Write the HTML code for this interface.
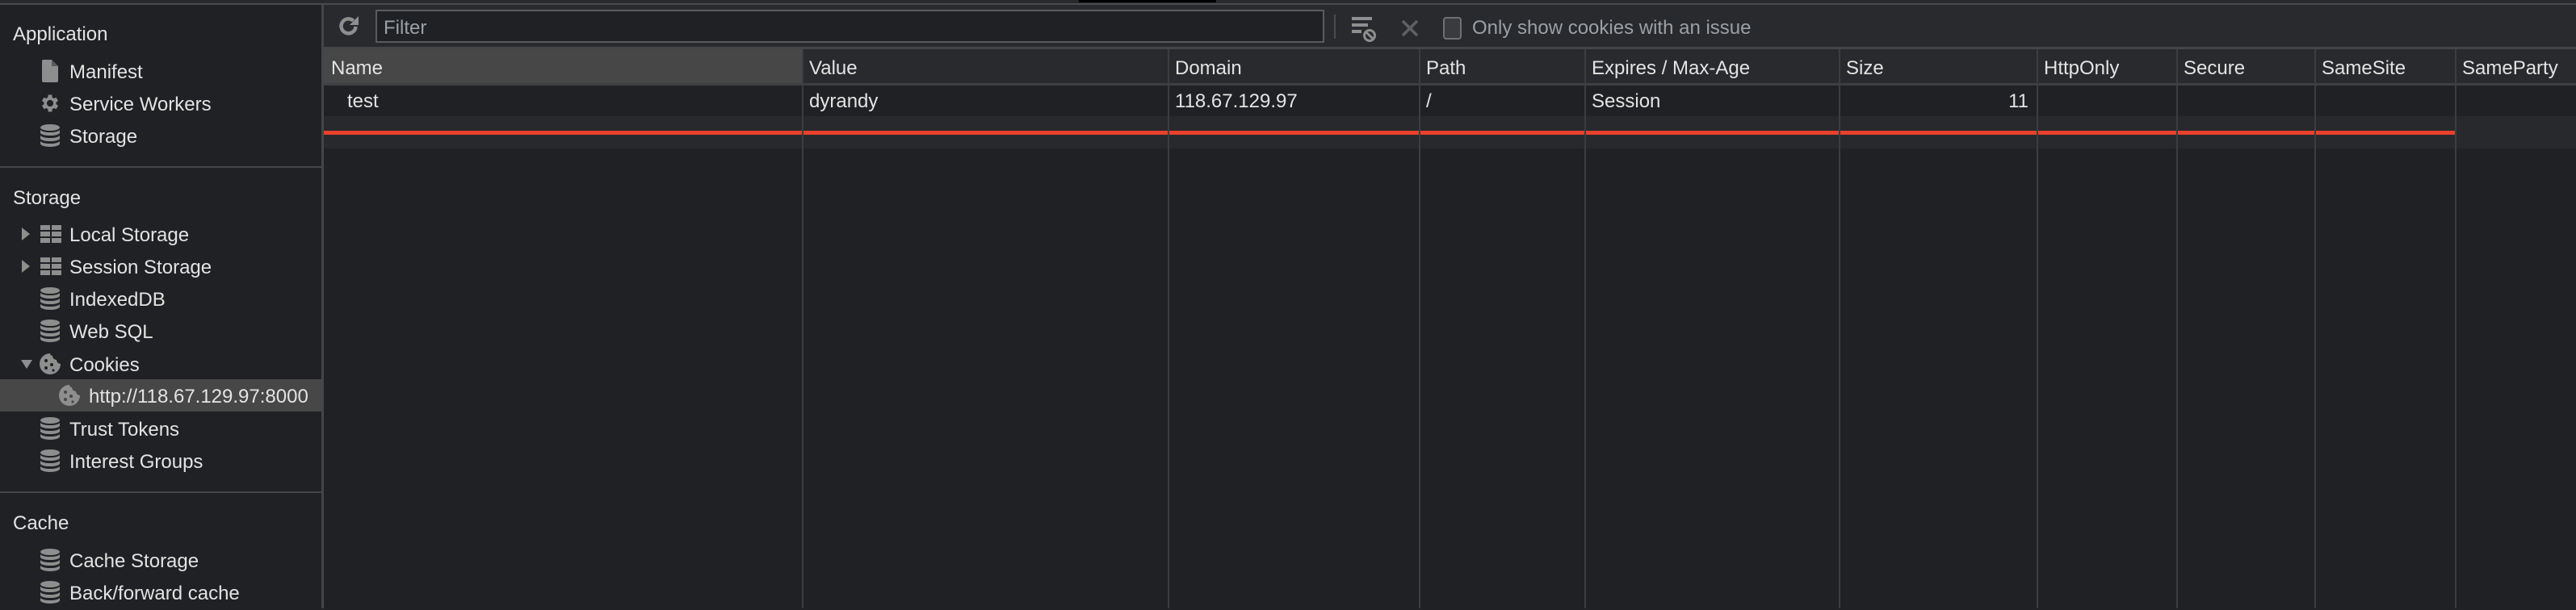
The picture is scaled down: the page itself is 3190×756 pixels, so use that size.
<!DOCTYPE html>
<html><head><meta charset="utf-8"><style>
*{margin:0;padding:0;box-sizing:border-box}
body{width:3190px;height:754px;background:#202124;font-family:"Liberation Sans",Arial,sans-serif;font-size:24px;color:#e3e3e3;position:relative;overflow:hidden}
.a{position:absolute;white-space:nowrap}
.t{position:absolute;white-space:nowrap;line-height:40px;height:40px;padding-top:2px}
.ic{position:absolute}
</style></head><body>
<div class="a" style="left:0;top:0;width:3190px;height:5px;background:#292a2d"></div>
<div class="a" style="left:1336px;top:0;width:170px;height:3px;background:#000"></div>
<div class="a" style="left:0;top:4px;width:3190px;height:2px;background:#4a4b4e"></div>
<!-- sidebar -->
<div class="a" style="left:398px;top:6px;width:3px;height:748px;background:#444548"></div>
<div class="t" style="left:16px;top:21px">Application</div>
<svg class="ic" style="left:52px;top:74px" width="20" height="28"><path d="M0 2a2 2 0 0 1 2-2h10l8 8v18a2 2 0 0 1-2 2H2a2 2 0 0 1-2-2z" fill="#8e8e8e"/><path d="M12 0v8h8" fill="#5a5a5a"/></svg>
<div class="t" style="left:86px;top:68px">Manifest</div>
<svg class="ic" style="left:48px;top:114px" width="28" height="28" viewBox="0 0 24 24"><path fill="#8e8e8e" d="M19.4 13a7.5 7.5 0 0 0 0-2l2.1-1.6-2-3.5-2.5 1a7 7 0 0 0-1.7-1L15 3h-4l-.4 2.9a7 7 0 0 0-1.7 1l-2.5-1-2 3.5L6.6 11a7.5 7.5 0 0 0 0 2l-2.1 1.6 2 3.5 2.5-1a7 7 0 0 0 1.7 1L11 21h4l.4-2.9a7 7 0 0 0 1.700-1l2.5 1 2-3.5zM13 15.5a3.5 3.5 0 1 1 0-7 3.5 3.5 0 0 1 0 7z" transform="translate(-1 0)"/></svg>
<div class="t" style="left:86px;top:108px">Service Workers</div>
<svg class="ic" style="left:50px;top:154px" width="24" height="28"><use href="#dbp"/></svg>
<div class="t" style="left:86px;top:148px">Storage</div>
<div class="a" style="left:0;top:206px;width:398px;height:2px;background:#444548"></div>
<div class="t" style="left:16px;top:224px">Storage</div>
<svg class="ic" style="left:27px;top:282px" width="12" height="16"><path d="M0 0l10 8-10 8z" fill="#8e8e8e"/></svg>
<svg class="ic" style="left:50px;top:279px" width="26" height="22"><g fill="#8e8e8e"><rect x="0" y="0" width="12" height="6"/><rect x="14" y="0" width="12" height="6"/><rect x="0" y="8" width="12" height="6"/><rect x="14" y="8" width="12" height="6"/><rect x="0" y="16" width="12" height="6"/><rect x="14" y="16" width="12" height="6"/></g></svg>
<div class="t" style="left:86px;top:270px">Local Storage</div>
<svg class="ic" style="left:27px;top:322px" width="12" height="16"><path d="M0 0l10 8-10 8z" fill="#8e8e8e"/></svg>
<svg class="ic" style="left:50px;top:319px" width="26" height="22"><g fill="#8e8e8e"><rect x="0" y="0" width="12" height="6"/><rect x="14" y="0" width="12" height="6"/><rect x="0" y="8" width="12" height="6"/><rect x="14" y="8" width="12" height="6"/><rect x="0" y="16" width="12" height="6"/><rect x="14" y="16" width="12" height="6"/></g></svg>
<div class="t" style="left:86px;top:310px">Session Storage</div>
<svg class="ic" style="left:50px;top:356px" width="24" height="28"><use href="#dbp"/></svg>
<div class="t" style="left:86px;top:350px">IndexedDB</div>
<svg class="ic" style="left:50px;top:396px" width="24" height="28"><use href="#dbp"/></svg>
<div class="t" style="left:86px;top:390px">Web SQL</div>
<svg class="ic" style="left:26px;top:446px" width="14" height="12"><path d="M0 0h14l-7 11z" fill="#8e8e8e"/></svg>
<svg class="ic" style="left:48px;top:437px" width="28" height="28" viewBox="0 0 28 28"><path d="M14 1a13 13 0 1 0 13 13 5 5 0 0 1-5-5 5 5 0 0 1-5-5 3 3 0 0 1-3-3z" fill="#8e8e8e"/><g fill="#202124"><circle cx="9" cy="10" r="2"/><circle cx="16" cy="15" r="2"/><circle cx="9" cy="19" r="2"/><circle cx="18" cy="22" r="1.6"/></g></svg>
<div class="t" style="left:86px;top:431px">Cookies</div>
<div class="a" style="left:0;top:470px;width:398px;height:40px;background:#474747"></div>
<svg class="ic" style="left:72px;top:476px" width="28" height="28" viewBox="0 0 28 28"><path d="M14 1a13 13 0 1 0 13 13 5 5 0 0 1-5-5 5 5 0 0 1-5-5 3 3 0 0 1-3-3z" fill="#8e8e8e"/><g fill="#474747"><circle cx="9" cy="10" r="2"/><circle cx="16" cy="15" r="2"/><circle cx="9" cy="19" r="2"/><circle cx="18" cy="22" r="1.6"/></g></svg>
<div class="t" style="left:110px;top:470px">http://118.67.129.97:8000</div>
<svg class="ic" style="left:50px;top:517px" width="24" height="28"><use href="#dbp"/></svg>
<div class="t" style="left:86px;top:511px">Trust Tokens</div>
<svg class="ic" style="left:50px;top:557px" width="24" height="28"><use href="#dbp"/></svg>
<div class="t" style="left:86px;top:551px">Interest Groups</div>
<div class="a" style="left:0;top:609px;width:398px;height:2px;background:#444548"></div>
<div class="t" style="left:16px;top:627px">Cache</div>
<svg class="ic" style="left:50px;top:680px" width="24" height="28"><use href="#dbp"/></svg>
<div class="t" style="left:86px;top:674px">Cache Storage</div>
<svg class="ic" style="left:50px;top:720px" width="24" height="28"><use href="#dbp"/></svg>
<div class="t" style="left:86px;top:714px">Back/forward cache</div>
<svg width="0" height="0" style="position:absolute"><defs><g id="dbp" fill="#8e8e8e"><ellipse cx="12" cy="4" rx="12" ry="4"/><path d="M0 7c2 2 6 3 12 3s10-1 12-3v4c-2 2-6 3-12 3S2 13 0 11zM0 14c2 2 6 3 12 3s10-1 12-3v4c-2 2-6 3-12 3S2 20 0 18zM0 21c2 2 6 3 12 3s10-1 12-3v3c0 2-5 4-12 4S0 26 0 24z"/></g></defs></svg>
<!-- toolbar -->
<div class="a" style="left:401px;top:6px;width:2789px;height:52px;background:#292a2d"></div>
<svg class="ic" style="left:418px;top:18px" width="28" height="28" viewBox="0 0 28 28"><path d="M22.5 15a9 9 0 1 1-2.8-7.2" fill="none" stroke="#8e8e8e" stroke-width="4.5"/><path d="M26 2v11h-11z" fill="#8e8e8e"/></svg>
<div class="a" style="left:465px;top:12px;width:1175px;height:41px;border:2px solid #5a5b5e;background:#202124"></div>
<div class="t" style="left:475px;top:13px;color:#9aa0a6">Filter</div>
<div class="a" style="left:1652px;top:18px;width:2px;height:30px;background:#4a4b4e"></div>
<svg class="ic" style="left:1674px;top:19px" width="32" height="34"><g fill="#8e8e8e"><rect x="0" y="2" width="25" height="4"/><rect x="0" y="10" width="20" height="4"/><rect x="0" y="18" width="12" height="4"/></g><circle cx="22" cy="25" r="6.5" fill="none" stroke="#8e8e8e" stroke-width="3"/><path d="M18 21l8 8" stroke="#8e8e8e" stroke-width="3"/></svg>
<svg class="ic" style="left:1735px;top:24px" width="22" height="22"><path d="M2 2l18 18M20 2L2 20" stroke="#5f6063" stroke-width="3.5"/></svg>
<div class="a" style="left:1787px;top:21px;width:23px;height:28px;border:2px solid #6f7073;border-radius:4px;background:#3a3b3e"></div>
<div class="t" style="left:1823px;top:13px;color:#9aa0a6">Only show cookies with an issue</div>
<div class="a" style="left:401px;top:58px;width:2789px;height:3px;background:#444548"></div>
<!-- table -->
<div class="a" style="left:401px;top:61px;width:2789px;height:42px;background:#292a2d"></div>
<div class="a" style="left:401px;top:61px;width:592px;height:42px;background:#474747"></div>
<div class="a" style="left:401px;top:103px;width:2789px;height:3px;background:#3e3f42"></div>
<div class="a" style="left:401px;top:144px;width:2789px;height:40px;background:#28292c"></div>
<div class="a" style="left:401px;top:162px;width:2639px;height:5px;background:#e8412c"></div>
<div class="a" style="left:993px;top:61px;width:2px;height:693px;background:#3c3d40"></div>
<div class="a" style="left:1446px;top:61px;width:2px;height:693px;background:#3c3d40"></div>
<div class="a" style="left:1757px;top:61px;width:2px;height:693px;background:#3c3d40"></div>
<div class="a" style="left:1962px;top:61px;width:2px;height:693px;background:#3c3d40"></div>
<div class="a" style="left:2277px;top:61px;width:2px;height:693px;background:#3c3d40"></div>
<div class="a" style="left:2522px;top:61px;width:2px;height:693px;background:#3c3d40"></div>
<div class="a" style="left:2695px;top:61px;width:2px;height:693px;background:#3c3d40"></div>
<div class="a" style="left:2866px;top:61px;width:2px;height:693px;background:#3c3d40"></div>
<div class="a" style="left:3040px;top:61px;width:2px;height:693px;background:#3c3d40"></div>
<div class="t" style="left:410px;top:63px">Name</div>
<div class="t" style="left:1002px;top:63px">Value</div>
<div class="t" style="left:1455px;top:63px">Domain</div>
<div class="t" style="left:1766px;top:63px">Path</div>
<div class="t" style="left:1971px;top:63px">Expires / Max-Age</div>
<div class="t" style="left:2286px;top:63px">Size</div>
<div class="t" style="left:2531px;top:63px">HttpOnly</div>
<div class="t" style="left:2704px;top:63px">Secure</div>
<div class="t" style="left:2875px;top:63px">SameSite</div>
<div class="t" style="left:3049px;top:63px">SameParty</div>
<div class="t" style="left:430px;top:104px">test</div>
<div class="t" style="left:1002px;top:104px">dyrandy</div>
<div class="t" style="left:1455px;top:104px">118.67.129.97</div>
<div class="t" style="left:1766px;top:104px">/</div>
<div class="t" style="left:1971px;top:104px">Session</div>
<div class="t" style="left:2480px;top:104px;width:32px;text-align:right">11</div>
</body></html>
